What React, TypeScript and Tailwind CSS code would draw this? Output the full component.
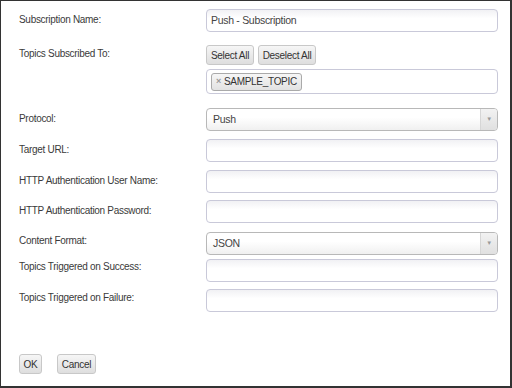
import React from "react";

const font = { fontFamily: '"Liberation Sans", Arial, sans-serif' };

function Label({ text, pt }: { text: string; pt: string }) {
  return (
    <div className={`w-[187px] shrink-0 text-[10px] leading-[14px] tracking-[-0.3px] text-[#3a3a3a] ${pt}`}>
      {text}
    </div>
  );
}

function TextInput({ value = "" }: { value?: string }) {
  return (
    <div className="flex h-[23px] w-[292px] items-center rounded-[4px] border border-[#c9c9d9] bg-gradient-to-b from-[#f1f1f4] to-white to-[40%] px-[4px] text-[10.5px] tracking-[-0.3px] text-[#444]">
      {value}
    </div>
  );
}

function Select({ value }: { value: string }) {
  return (
    <div className="flex h-[23px] w-[292px] items-stretch overflow-hidden rounded-[4px] border border-[#b8b8b8] bg-gradient-to-b from-white from-[40%] to-[#f0f0f0] text-[10.5px] tracking-[-0.3px] text-[#444]">
      <div className="flex flex-1 items-center px-[6px]">{value}</div>
      <div className="flex w-[17px] items-center justify-center border-l border-[#d6d6d6] bg-gradient-to-b from-[#f2f2f2] to-[#e0e0e0] text-[6px] text-[#999]">
        ▼
      </div>
    </div>
  );
}

function Button({ text, w }: { text: string; w: string }) {
  return (
    <div
      className={`flex h-[20px] ${w} items-center justify-center rounded-[3px] border border-[#c8c8c8] bg-gradient-to-b from-[#f6f6f6] to-[#dedede] text-[10px] tracking-[-0.3px] text-[#333]`}
    >
      {text}
    </div>
  );
}

export default function App() {
  return (
    <div
      style={font}
      className="flex h-[388px] w-[512px] flex-col border-t border-l border-r-2 border-b-2 border-[#333] bg-white pl-[18px]"
    >
      <div className="mt-[8px] flex">
        <Label text="Subscription Name:" pt="pt-[4px]" />
        <TextInput value="Push - Subscription" />
      </div>

      <div className="mt-[13px] flex">
        <Label text="Topics Subscribed To:" pt="pt-[2px]" />
        <div className="flex flex-col">
          <div className="flex gap-[4px]">
            <Button text="Select All" w="w-[48px]" />
            <Button text="Deselect All" w="w-[58px]" />
          </div>
          <div className="mt-[4px] flex h-[25px] w-[292px] items-center rounded-[4px] border border-[#c9c9d9] bg-white px-[4px]">
            <div className="flex h-[18px] items-center gap-[3px] rounded-[3px] border border-[#aaa] bg-gradient-to-b from-[#f6f6f6] to-[#e2e2e2] px-[4px] text-[10px] tracking-[-0.3px] text-[#333]">
              <span className="text-[9px] font-bold text-[#999]">×</span>
              SAMPLE_TOPIC
            </div>
          </div>
        </div>
      </div>

      <div className="mt-[14px] flex">
        <Label text="Protocol:" pt="pt-[4px]" />
        <Select value="Push" />
      </div>

      <div className="mt-[8px] flex">
        <Label text="Target URL:" pt="pt-[4px]" />
        <TextInput />
      </div>

      <div className="mt-[8px] flex">
        <Label text="HTTP Authentication User Name:" pt="pt-[4px]" />
        <TextInput />
      </div>

      <div className="mt-[7px] flex">
        <Label text="HTTP Authentication Password:" pt="pt-[4px]" />
        <TextInput />
      </div>

      <div className="mt-[9px] flex">
        <Label text="Content Format:" pt="pt-[2px]" />
        <Select value="JSON" />
      </div>

      <div className="mt-[4px] flex">
        <Label text="Topics Triggered on Success:" pt="pt-[1px]" />
        <TextInput />
      </div>

      <div className="mt-[7px] flex">
        <Label text="Topics Triggered on Failure:" pt="pt-[2px]" />
        <TextInput />
      </div>

      <div className="mt-[42px] flex gap-[15px]">
        <Button text="OK" w="w-[23px]" />
        <Button text="Cancel" w="w-[39px]" />
      </div>
    </div>
  );
}
